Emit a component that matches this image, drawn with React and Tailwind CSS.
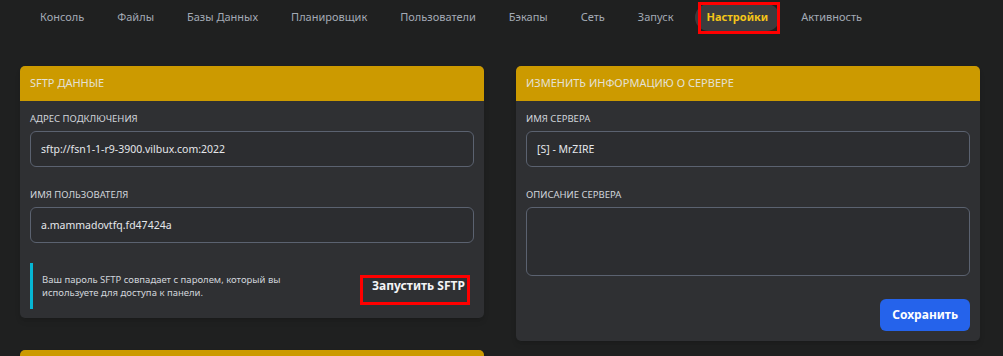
import { useState } from 'react';

const tabs = [
  'Консоль',
  'Файлы',
  'Базы Данных',
  'Планировщик',
  'Пользователи',
  'Бэкапы',
  'Сеть',
  'Запуск',
  'Настройки',
  'Активность',
];

function Field({ label, value, tall }) {
  return (
    <div className="flex flex-col">
      <label className="text-[9.5px] leading-[15px] uppercase text-[#d1d5db] mb-[5px]">{label}</label>
      {tall ? (
        <textarea
          defaultValue={value}
          className="h-[69px] w-full resize-none rounded-[6px] border border-[#5b6270] bg-[#2c2d30] px-[10px] py-[8px] text-[10.5px] text-[#e5e7eb] outline-none"
        />
      ) : (
        <input
          defaultValue={value}
          className="h-[36px] w-full rounded-[6px] border border-[#5b6270] bg-[#2c2d30] px-[10px] text-[10.5px] text-[#e5e7eb] outline-none"
        />
      )}
    </div>
  );
}

function Card({ title, children }) {
  return (
    <div className="rounded-[5px] bg-[#2f3033] shadow-md overflow-hidden">
      <div className="h-[35px] flex items-center px-[10px] bg-[#cc9a00] text-[11px] uppercase text-[#e4e1d6]">
        {title}
      </div>
      {children}
    </div>
  );
}

export default function App() {
  const [active, setActive] = useState('Настройки');

  return (
    <div className="h-[356px] bg-[#1f2020] overflow-hidden font-['Noto_Sans',sans-serif]">
      {/* NAV */}
      <nav className="h-[34px] flex items-center gap-[9px] pl-[28px]">
        {tabs.map((t) =>
          t === active ? (
            <div key={t} className="relative">
              <button className="h-[27px] px-[12px] rounded-full bg-[#3b3c3e] text-[11px] font-bold text-[#f5c518]">
                {t}
              </button>
              <div className="absolute left-[3px] -top-[1px] w-[82px] h-[32px] border-[3px] border-[#ff0000] pointer-events-none" />
            </div>
          ) : (
            <button
              key={t}
              onClick={() => setActive(t)}
              className="h-[27px] px-[12px] text-[11px] text-[#a3aab5]"
            >
              {t}
            </button>
          )
        )}
      </nav>

      {/* CONTENT */}
      <div className="grid grid-cols-2 gap-[32px] w-[960px] ml-[20px] mt-[32px]">
        <div className="flex flex-col gap-[32px]">
          <Card title="SFTP Данные">
            <div className="px-[10px] pt-[10px] pb-[9px] flex flex-col gap-[20px]">
              <Field label="Адрес подключения" value="sftp://fsn1-1-r9-3900.vilbux.com:2022" />
              <Field label="Имя пользователя" value="a.mammadovtfq.fd47424a" />
              <div className="flex items-center justify-between">
                <div className="border-l-[3px] border-[#06b6d4] pl-[9px] py-[10px] text-[9.5px] leading-[13px] text-[#d1d5db] w-[290px]">
                  Ваш пароль SFTP совпадает с паролем, который вы используете для доступа к панели.
                </div>
                <button className="h-[30px] w-[110px] mr-[4px] border-[3px] border-[#ff0000] pl-[9px] text-left text-[12px] leading-[16px] font-bold text-[#f3f4f6] self-center mt-[7px] flex items-start">
                  Запустить SFTP
                </button>
              </div>
            </div>
          </Card>
          <Card title="">
            <div className="h-[40px]" />
          </Card>
        </div>

        <div>
          <Card title="Изменить информацию о сервере">
            <div className="px-[10px] pt-[10px] pb-[10px] flex flex-col gap-[20px]">
              <Field label="Имя сервера" value="[S] - MrZIRE" />
              <Field label="Описание сервера" value="" tall />
              <div className="flex justify-end mt-[3px]">
                <button className="h-[32px] px-[12px] rounded-[6px] bg-[#2563eb] text-[12px] font-bold text-white">
                  Сохранить
                </button>
              </div>
            </div>
          </Card>
        </div>
      </div>
    </div>
  );
}
